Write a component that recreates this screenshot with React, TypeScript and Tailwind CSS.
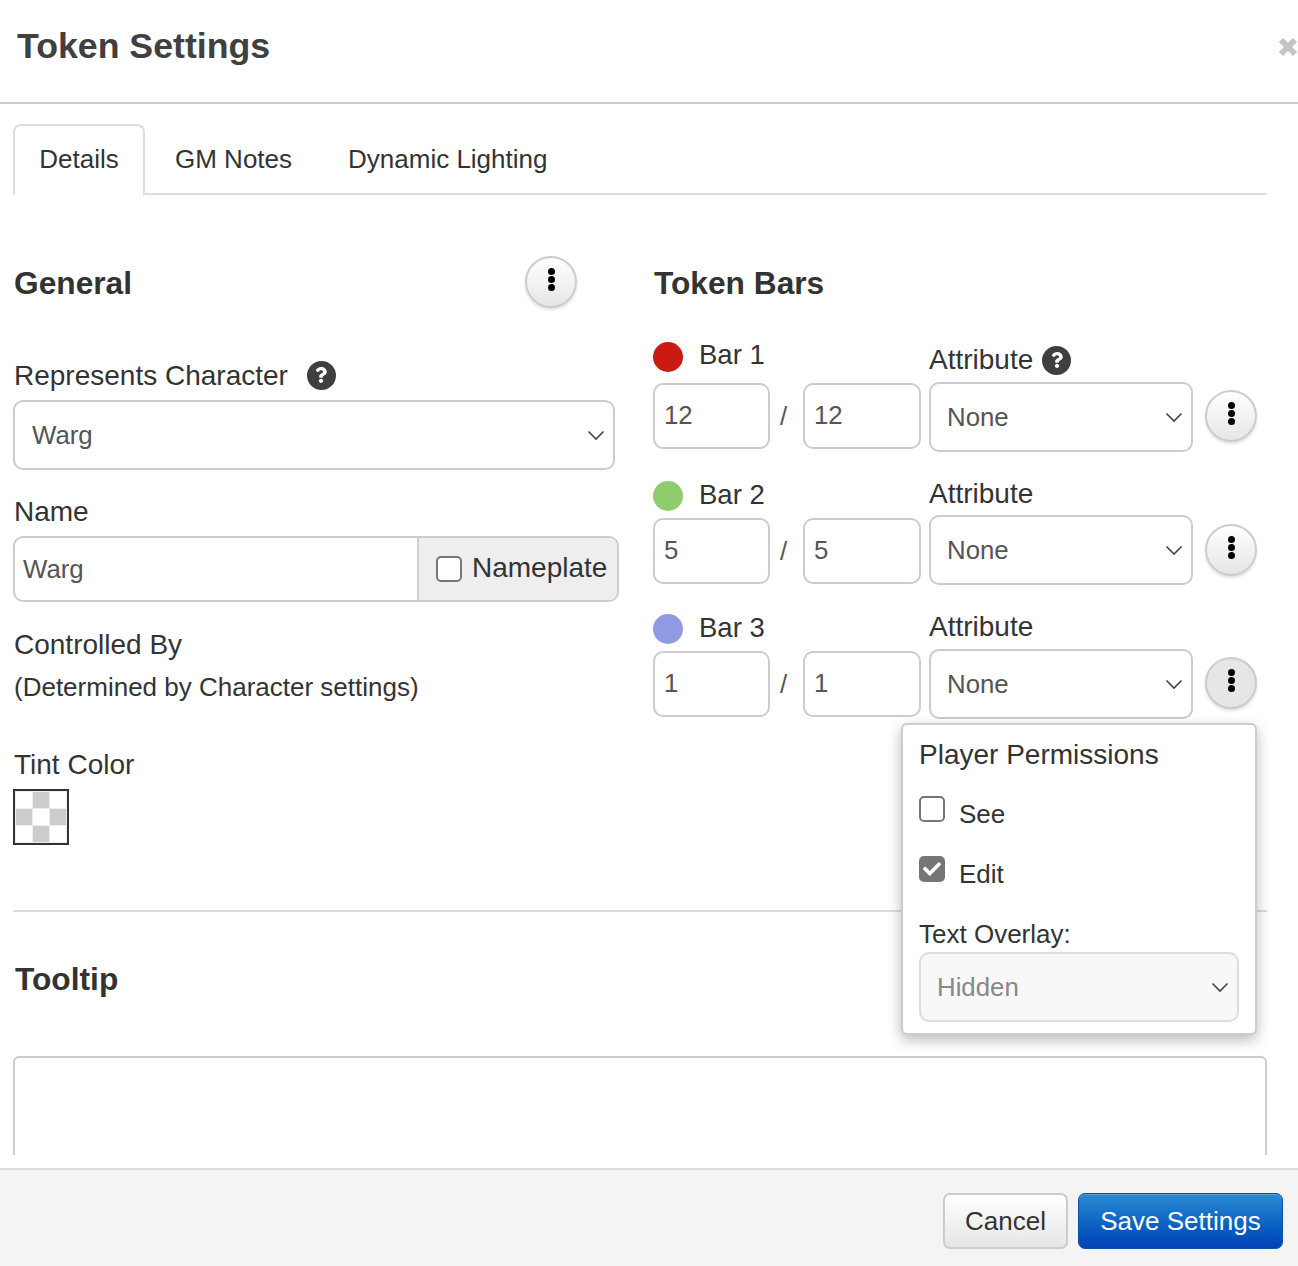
import React from 'react';
import { FaCheck, FaQuestion } from 'react-icons/fa';

const Chevron = () => (
  <svg width="18" height="11" viewBox="0 0 18 11" fill="none" stroke="#444" strokeWidth="1.6">
    <path d="M1.5 1.5 L9 9 L16.5 1.5" />
  </svg>
);

const HelpIcon = () => (
  <span className="flex h-[29px] w-[29px] items-center justify-center rounded-full bg-[#3f3f3f] text-white">
    <FaQuestion size={16} />
  </span>
);

const MoreButton = ({ className = '', active = false }: { className?: string; active?: boolean }) => (
  <button
    className={`flex h-[52px] w-[52px] shrink-0 flex-col items-center justify-start gap-[1px] rounded-full border-2 border-[#ccc] pt-[10px] shadow-[0_2px_3px_rgba(0,0,0,0.12)] ${
      active ? 'bg-[#e6e6e6]' : 'bg-gradient-to-b from-white to-[#e6e6e6]'
    } ${className}`}
  >
    <span className="h-[7px] w-[7px] rounded-full bg-black" />
    <span className="h-[7px] w-[7px] rounded-full bg-black" />
    <span className="h-[7px] w-[7px] rounded-full bg-black" />
  </button>
);

const SelectBox = ({ value, className = '' }: { value: string; className?: string }) => (
  <div className={`flex items-center justify-between rounded-[10px] border-2 border-[#ccc] bg-white pl-[16px] pr-[8px] text-[25.8px] text-[#555] ${className}`}>
    <span>{value}</span>
    <Chevron />
  </div>
);

const NumberBox = ({ value }: { value: string }) => (
  <div className="flex h-[66px] w-[117px] items-center rounded-[10px] border-2 border-[#ccc] bg-white pb-[2px] pl-[9px] text-[25.8px] text-[#555] last:w-[118px]">
    {value}
  </div>
);

type BarProps = {
  label: string;
  dot: string;
  value: string;
  rowClass: string;
  inputGap: string;
  selectGap: string;
  labelClass: string;
  buttonClass: string;
  help?: boolean;
  active?: boolean;
};

const BarRow = ({ label, dot, value, rowClass, inputGap, selectGap, labelClass, buttonClass, help, active }: BarProps) => (
  <div className={`flex ${rowClass}`}>
    <div className="w-[276px] shrink-0">
      <div className={`flex h-[30px] items-center gap-[16px] pt-[4px] ${inputGap}`}>
        <span className={`h-[30px] w-[30px] rounded-full ${dot}`} />
        <span className={`text-[27.5px] ${labelClass}`}>{label}</span>
      </div>
      <div className="flex items-center">
        <NumberBox value={value} />
        <span className="w-[33px] pr-[6px] text-center text-[25.8px] text-[#555]">/</span>
        <NumberBox value={value} />
      </div>
    </div>
    <div className="w-[264px] shrink-0">
      <div className={`flex h-[30px] items-center gap-[9px] ${selectGap}`}>
        <span>Attribute</span>
        {help && <HelpIcon />}
      </div>
      <SelectBox value="None" className="h-[70px]" />
    </div>
    <MoreButton className={`ml-[12px] ${buttonClass}`} active={active} />
  </div>
);

export default function App() {
  return (
    <div className="relative flex h-[1266px] w-[1298px] flex-col overflow-hidden bg-white font-['Liberation_Sans',Arial,sans-serif] text-[28px] leading-[30px] text-[#333]">
      {/* header */}
      <div className="relative h-[104px] shrink-0 border-b-2 border-[#ccc] pl-[17px] pt-[25px]">
        <h1 className="text-[35.7px] font-bold leading-[42px] text-[#404040]">Token Settings</h1>
        <svg className="absolute right-0 top-[37px] blur-[0.5px]" width="20" height="20" viewBox="0 0 20 20" stroke="#c4c4c4" strokeWidth="6">
          <path d="M3 3 L17 17 M17 3 L3 17" />
        </svg>
      </div>

      {/* body */}
      <div className="relative min-h-0 flex-1 overflow-hidden px-[13px] pt-[20px]">
        <div className="flex h-[71px] w-[1254px] border-b-2 border-[#ddd] text-[26px]">
          <div className="flex h-[71px] w-[132px] items-center justify-center rounded-t-[8px] border-2 border-b-0 border-[#ddd] bg-white pb-[4px]">Details</div>
          <div className="ml-[30px] flex h-[70px] items-center">GM Notes</div>
          <div className="ml-[56px] flex h-[70px] items-center">Dynamic Lighting</div>
        </div>

        <div className="flex">
          {/* general */}
          <div className="w-[640px] shrink-0">
            <div className="mt-[61px] flex h-[52px] w-[564px] items-center justify-between">
              <h2 className="ml-[1px] mt-[2px] text-[31.7px] font-bold leading-[52px]">General</h2>
              <MoreButton />
            </div>
            <div className="mt-[52px] flex h-[30px] items-center gap-[19px] pl-[1px]">
              <span className="mt-[2px]">Represents Character</span>
              <HelpIcon />
            </div>
            <SelectBox value="Warg" className="mt-[10px] h-[70px] w-[602px] pl-[17px]" />
            <div className="mt-[27px] h-[29px] pl-[1px]">Name</div>
            <div className="mt-[10px] flex h-[66px] w-[606px] overflow-hidden rounded-[10px] border-2 border-[#ccc]">
              <div className="flex flex-1 items-center pl-[8px] text-[25.8px] text-[#555]">Warg</div>
              <div className="flex w-[200px] items-center gap-[10px] border-l-2 border-[#ccc] bg-[#eee] pl-[17px]">
                <span className="h-[26px] w-[26px] rounded-[5px] border-2 border-[#767676] bg-white" />
                <span className="-mt-[3px]">Nameplate</span>
              </div>
            </div>
            <div className="mt-[28px] h-[29px] pl-[1px]">Controlled By</div>
            <div className="mt-[13px] h-[30px] pl-[1px] text-[26px]">(Determined by Character settings)</div>
            <div className="mt-[48px] h-[30px] pl-[1px]">Tint Color</div>
            <div className="mt-[9px] h-[56px] w-[56px] border-2 border-[#333]">
              <div className="grid h-full w-full grid-cols-3 grid-rows-3 gap-[1px] bg-[#eee] p-[1px]">
                {[0, 1, 0, 1, 0, 1, 0, 1, 0].map((c, i) => (
                  <span key={i} className={c ? 'bg-[#ccc]' : 'bg-white'} />
                ))}
              </div>
            </div>
          </div>

          {/* token bars */}
          <div>
            <h2 className="ml-[1px] mt-[62px] text-[31.7px] font-bold leading-[52px]">Token Bars</h2>
            <BarRow
              label="Bar 1"
              dot="bg-[#c91b12]"
              value="12"
              rowClass="mt-[31px]"
              inputGap="mb-[13px]"
              selectGap="mb-[7px] mt-[5px]"
              labelClass="-mt-[4px]"
              buttonClass="mt-[50px]"
              help
            />
            <BarRow
              label="Bar 2"
              dot="bg-[#8fcb6f]"
              value="5"
              rowClass="mt-[27px]"
              inputGap="mb-[9px]"
              selectGap="mb-[6px]"
              labelClass="-mt-[2px]"
              buttonClass="mt-[45px]"
            />
            <BarRow
              label="Bar 3"
              dot="bg-[#8f9ae2]"
              value="1"
              rowClass="mt-[27px]"
              inputGap="mb-[9px]"
              selectGap="mb-[7px]"
              labelClass="-mt-[2px]"
              buttonClass="mt-[45px]"
              active
            />
          </div>
        </div>

        <div className="absolute left-[13px] right-[31px] top-[806px] border-t-2 border-[#ddd]" />
        <h2 className="absolute left-[15px] top-[849px] text-[31.7px] font-bold leading-[52px]">Tooltip</h2>
        <div className="absolute left-[13px] right-[31px] top-[952px] h-[140px] rounded-[6px] border-2 border-[#ccc] bg-white" />

        {/* permissions popover */}
        <div className="absolute left-[901px] top-[619px] z-10 h-[312px] w-[356px] rounded-[6px] border-2 border-[#ccc] bg-white pl-[16px] pr-[16px] shadow-[0_5px_14px_rgba(0,0,0,0.28)]">
          <div className="mt-[15px]">Player Permissions</div>
          <div className="mt-[26px] flex h-[38px] gap-[14px] text-[26px]">
            <span className="h-[26px] w-[26px] rounded-[5px] border-2 border-[#767676] bg-white" />
            <span className="mt-[3px]">See</span>
          </div>
          <div className="mt-[22px] flex h-[38px] gap-[14px] text-[26px]">
            <span className="flex h-[26px] w-[26px] items-center justify-center rounded-[5px] bg-[#767676] text-white">
              <FaCheck size={18} />
            </span>
            <span className="mt-[3px]">Edit</span>
          </div>
          <div className="mt-[25px] h-[30px] text-[26px]">Text Overlay:</div>
          <SelectBox value="Hidden" className="mt-[3px] h-[70px] !border-[#ddd] !bg-[#f8f8f8] !text-[#888]" />
        </div>
      </div>

      {/* footer */}
      <div className="mt-[13px] flex h-[98px] shrink-0 items-start justify-end gap-[10px] border-t-2 border-[#ddd] bg-[#f4f4f4] pr-[15px] pt-[23px] text-[26px]">
        <button className="h-[56px] w-[125px] rounded-[7px] border-2 border-[#ccc] bg-gradient-to-b from-white to-[#e6e6e6] text-[#333]">Cancel</button>
        <button className="h-[56px] w-[205px] rounded-[7px] border border-[#0d4fa8] bg-gradient-to-b from-[#2a8ad0] to-[#0440b8] text-white shadow-[inset_0_1px_0_rgba(255,255,255,0.2)]">Save Settings</button>
      </div>
    </div>
  );
}
